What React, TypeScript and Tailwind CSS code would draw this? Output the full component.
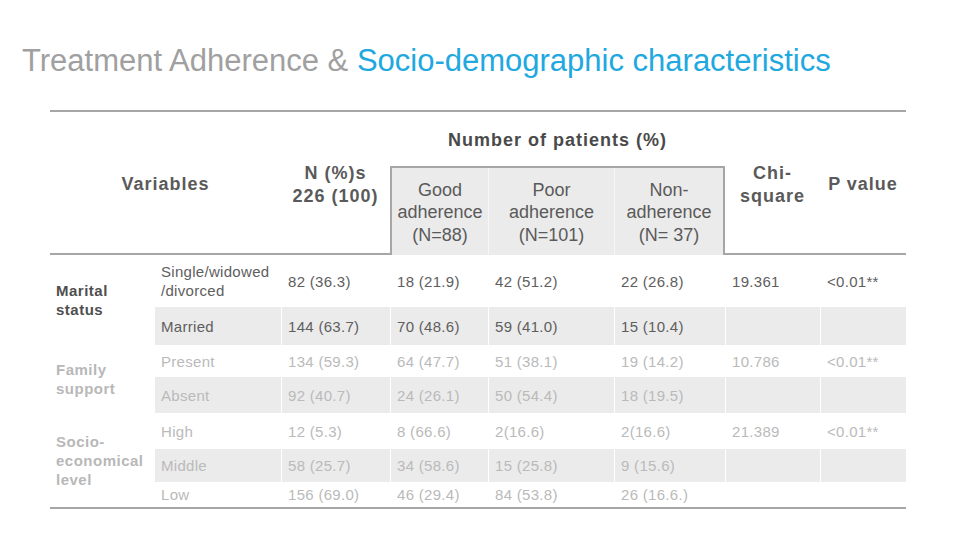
import type { ReactNode } from "react";

type Row = {
  label: ReactNode;
  n: string;
  good: string;
  poor: string;
  non: string;
  chi?: string;
  p?: string;
  shaded: boolean;
};

type Group = {
  name: ReactNode;
  tone: "dark" | "light";
  rows: Row[];
  heights: string[];
};

const groups: Group[] = [
  {
    name: (
      <>
        Marital
        <br />
        status
      </>
    ),
    tone: "dark",
    heights: ["h-[52px]", "h-[38px]"],
    rows: [
      {
        label: (
          <>
            Single/widowed
            <br />
            /divorced
          </>
        ),
        n: "82 (36.3)",
        good: "18 (21.9)",
        poor: "42 (51.2)",
        non: "22 (26.8)",
        chi: "19.361",
        p: "<0.01**",
        shaded: false,
      },
      {
        label: "Married",
        n: "144 (63.7)",
        good: "70 (48.6)",
        poor: "59 (41.0)",
        non: "15 (10.4)",
        shaded: true,
      },
    ],
  },
  {
    name: (
      <>
        Family
        <br />
        support
      </>
    ),
    tone: "light",
    heights: ["h-[32px]", "h-[36px]"],
    rows: [
      {
        label: "Present",
        n: "134 (59.3)",
        good: "64 (47.7)",
        poor: "51 (38.1)",
        non: "19 (14.2)",
        chi: "10.786",
        p: "<0.01**",
        shaded: false,
      },
      {
        label: "Absent",
        n: "92 (40.7)",
        good: "24 (26.1)",
        poor: "50 (54.4)",
        non: "18 (19.5)",
        shaded: true,
      },
    ],
  },
  {
    name: (
      <>
        Socio-
        <br />
        economical
        <br />
        level
      </>
    ),
    tone: "light",
    heights: ["h-[36px]", "h-[33px]", "h-[25px]"],
    rows: [
      {
        label: "High",
        n: "12 (5.3)",
        good: "8 (66.6)",
        poor: "2(16.6)",
        non: "2(16.6)",
        chi: "21.389",
        p: "<0.01**",
        shaded: false,
      },
      {
        label: "Middle",
        n: "58 (25.7)",
        good: "34 (58.6)",
        poor: "15 (25.8)",
        non: "9 (15.6)",
        shaded: true,
      },
      {
        label: "Low",
        n: "156 (69.0)",
        good: "46 (29.4)",
        poor: "84 (53.8)",
        non: "26 (16.6.)",
        shaded: false,
      },
    ],
  },
];

const cols = "grid grid-cols-[105px_126px_109px_98px_126px_111px_95px_86px]";
const cellWidths = ["w-[109px]", "w-[98px]", "w-[126px]", "w-[111px]", "w-[95px]", "w-[86px]"];

function DataRow({ row, height, tone }: { row: Row; height: string; tone: "dark" | "light" }) {
  const cells = [row.n, row.good, row.poor, row.non, row.chi ?? "", row.p ?? ""];
  const text = tone === "dark" ? "text-[#5e5e5e]" : "text-[#bababa]";
  const bg = row.shaded ? "bg-[#ebebeb]" : "bg-white";
  return (
    <div className={`${height} flex ${text} ${bg} text-[15px] leading-[19px] tracking-[0.3px]`}>
      <div className="flex w-[126px] items-center pl-[6px]">
        <span>{row.label}</span>
      </div>
      {cells.map((c, i) => (
        <div key={i} className={`flex items-center border-l border-white pl-[6px] ${cellWidths[i]}`}>
          {c}
        </div>
      ))}
    </div>
  );
}

export default function App() {
  return (
    <div className="h-[540px] w-[960px] overflow-hidden bg-white font-['Liberation_Sans',Arial,sans-serif]">
      <h1 className="pl-[22px] pt-[45px] text-[31px] leading-[31px] font-normal text-[#a0a0a0]">
        Treatment Adherence &amp; <span className="text-[#20a8df]">Socio-demographic characteristics</span>
      </h1>

      <div className="ml-[50px] mt-[34px] w-[856px]">
        {/* header */}
        <div className={`${cols} grid-rows-[54px_89px] border-t-2 border-[#a6a6a6] font-bold text-[18px] tracking-[1px] text-[#5a5a5a]`}>
          <div className="col-span-2 row-span-2 flex items-center justify-center border-b-2 border-[#a6a6a6] pt-[4px]">
            Variables
          </div>
          <div className="row-span-2 flex items-center justify-center border-b-2 border-[#a6a6a6] pt-[4px] text-center leading-[23px]">
            N (%)s
            <br />
            226 (100)
          </div>
          <div className="col-span-3 flex items-center justify-center pt-[3px] text-[#4a4a4a]">
            Number of patients (%)
          </div>
          <div className="row-span-2 flex items-center justify-center border-b-2 border-[#a6a6a6] pt-[4px] text-center leading-[23px]">
            Chi-
            <br />
            square
          </div>
          <div className="row-span-2 flex items-center justify-center border-b-2 border-[#a6a6a6] pt-[4px]">
            P value
          </div>
          <div className="flex items-center justify-center border-l-2 border-t-2 border-[#a6a6a6] bg-[#ebebeb] pt-[2px] text-center text-[18px] leading-[22.5px] font-normal tracking-normal">
            Good
            <br />
            adherence
            <br />
            (N=88)
          </div>
          <div className="flex items-center justify-center border-t-2 border-[#a6a6a6] bg-[#ebebeb] text-center text-[18px] leading-[22.5px] font-normal tracking-normal">
            <div className="flex h-full w-full items-center justify-center border-l border-[#f6f6f6] pt-[2px]">
              Poor
              <br />
              adherence
              <br />
              (N=101)
            </div>
          </div>
          <div className="flex items-center justify-center border-r-2 border-t-2 border-[#a6a6a6] bg-[#ebebeb] text-center text-[18px] leading-[22.5px] font-normal tracking-normal">
            <div className="flex h-full w-full items-center justify-center border-l border-[#f6f6f6] pt-[2px]">
              Non-
              <br />
              adherence
              <br />
              (N= 37)
            </div>
          </div>
        </div>

        {/* body */}
        <div className="border-b-2 border-[#a6a6a6]">
          {groups.map((g, gi) => (
            <div key={gi} className="flex">
              <div
                className={`flex w-[105px] items-center pl-[6px] text-[15px] leading-[19px] font-bold tracking-[0.5px] ${
                  g.tone === "dark" ? "text-[#4f4f4f]" : "text-[#b8b8b8]"
                }`}
              >
                <span>{g.name}</span>
              </div>
              <div className="flex flex-col">
                {g.rows.map((r, ri) => (
                  <DataRow key={ri} row={r} height={g.heights[ri]} tone={g.tone} />
                ))}
              </div>
            </div>
          ))}
        </div>
      </div>
    </div>
  );
}
